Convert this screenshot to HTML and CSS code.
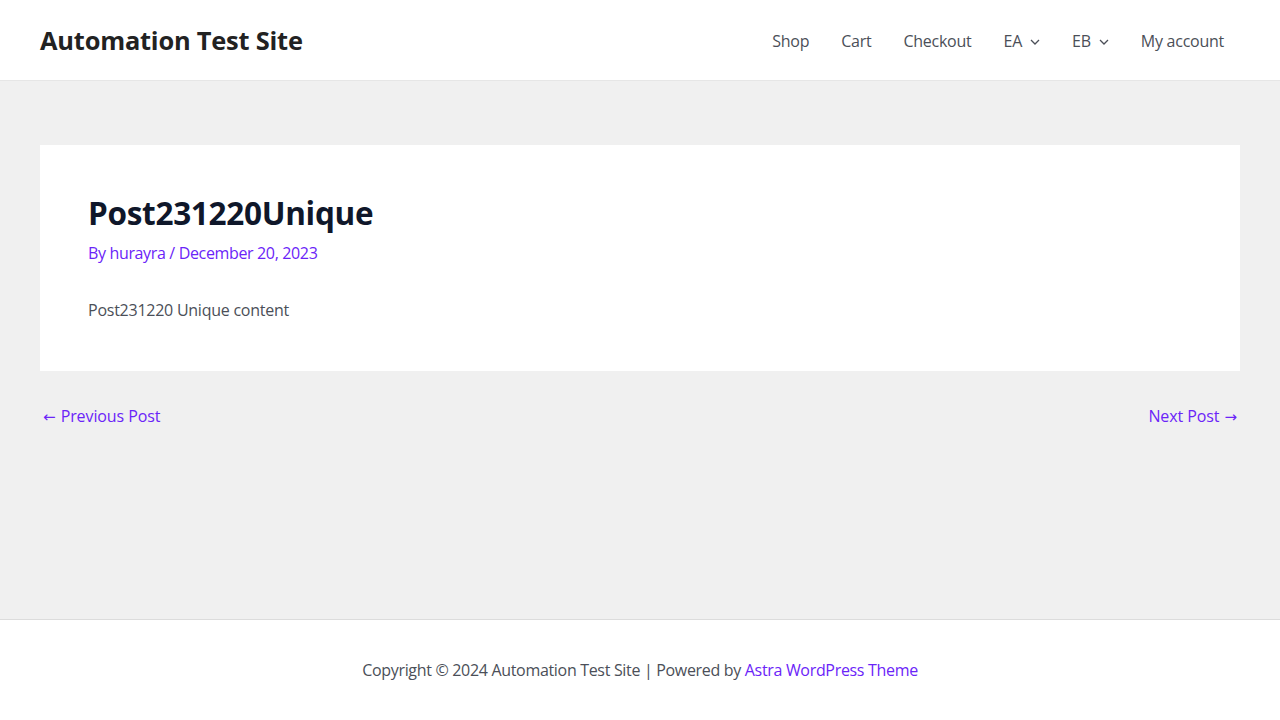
FILE: index.html
```html
<!DOCTYPE html>
<html lang="en">
<head>
<meta charset="utf-8">
<title>Post231220Unique – Automation Test Site</title>
<link rel="stylesheet" href="styles.css">
</head>
<body>
<header class="site-header">
  <div class="site-title">Automation Test Site</div>
  <nav class="main-nav">
    <a class="nav-item" href="#">Shop</a>
    <a class="nav-item" href="#">Cart</a>
    <a class="nav-item" href="#">Checkout</a>
    <a class="nav-item" href="#">EA <svg class="chev" viewBox="0 0 10 6" width="10" height="6"><path d="M1 1l4 4 4-4" fill="none" stroke="currentColor" stroke-width="1.3"/></svg></a>
    <a class="nav-item" href="#">EB <svg class="chev" viewBox="0 0 10 6" width="10" height="6"><path d="M1 1l4 4 4-4" fill="none" stroke="currentColor" stroke-width="1.3"/></svg></a>
    <a class="nav-item" href="#">My account</a>
  </nav>
</header>
<main class="site-content">
  <article class="post-card">
    <h1 class="post-title">Post231220Unique</h1>
    <div class="post-meta">By <a href="#">hurayra</a> / <a href="#">December 20, 2023</a></div>
    <p class="post-body">Post231220 Unique content</p>
  </article>
  <nav class="post-nav">
    <a href="#"><span class="arrow">←</span> Previous Post</a>
    <a href="#">Next Post <span class="arrow">→</span></a>
  </nav>
</main>
<footer class="site-footer">
  <p>Copyright © 2024 Automation Test Site | Powered by <a href="#">Astra WordPress Theme</a></p>
</footer>
</body>
</html>
```
FILE: styles.css
```css
* { box-sizing: border-box; }
html, body { margin: 0; padding: 0; }
body {
  font-family: "Open Sans", "Noto Sans", sans-serif;
  font-size: 16px;
  color: #4b4f58;
  background: #f0f0f0;
  height: 720px;
  display: flex;
  flex-direction: column;
}
a { color: #6b24f8; text-decoration: none; }
.site-header {
  height: 81px;
  background: #fff;
  border-bottom: 1px solid #e6e6e6;
  display: flex;
  align-items: center;
  justify-content: space-between;
  padding: 0 40px;
}
.site-title {
  font-size: 25.4px;
  font-weight: 700;
  color: #222;
  letter-spacing: -0.2px;
}
.main-nav { display: flex; align-items: center; padding-top: 2px; }
.nav-item {
  color: #4b4f58;
  font-size: 16px;
  padding: 0 16px;
  display: flex;
  align-items: center;
  gap: 8px;
  letter-spacing: -0.25px;
}
.chev { margin-top: 1px; }
.site-content {
  flex: 1;
  padding: 64px 40px 0;
}
.post-card {
  background: #fff;
  padding: 48px 48px 49px;
}
.post-title {
  margin: 0;
  font-size: 31.5px;
  line-height: 40px;
  font-weight: 700;
  color: #0f172a;
  letter-spacing: -0.3px;
}
.post-meta {
  margin-top: 8px;
  color: #6b24f8;
  font-size: 16px;
  line-height: 24px;
  letter-spacing: -0.35px;
}
.post-body {
  margin: 33px 0 0;
  font-size: 16px;
  line-height: 24px;
  letter-spacing: -0.25px;
}
.post-nav {
  display: flex;
  justify-content: space-between;
  padding: 33px 2px 0;
  font-size: 16px;
  line-height: 24px;
  letter-spacing: -0.1px;
}
.arrow {
  font-family: "DejaVu Sans", sans-serif;
  font-size: 15px;
  letter-spacing: 0;
  margin: 0 1px;
}
.site-footer {
  height: 101px;
  background: #fff;
  border-top: 1px solid #dcdcdc;
  display: flex;
  align-items: center;
  justify-content: center;
}
.site-footer p {
  margin: 0;
  font-size: 16px;
  letter-spacing: -0.32px;
}
```
